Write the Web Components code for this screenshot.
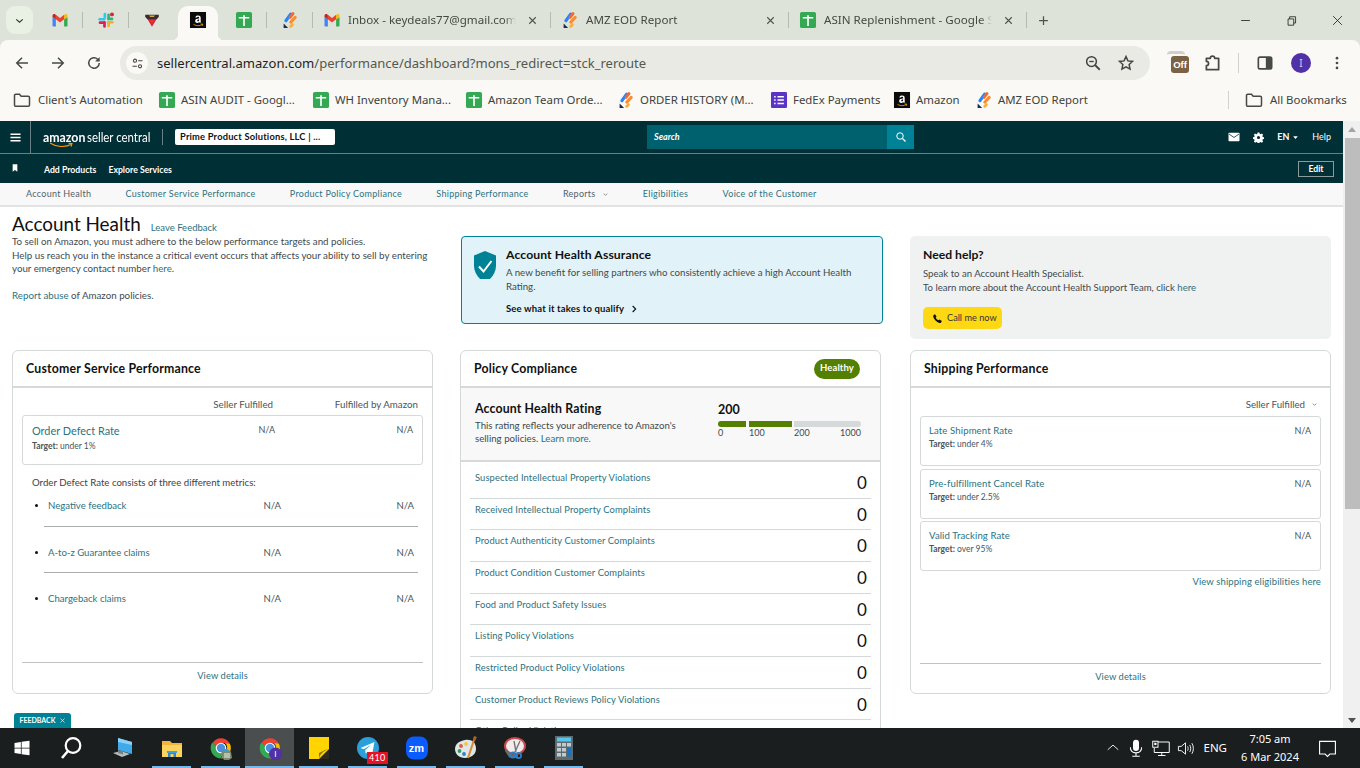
<!DOCTYPE html>
<html lang="en"><head><meta charset="utf-8"><title>Account Health</title>
<style>
html,body{margin:0;padding:0;width:1360px;height:768px;overflow:hidden;background:#fff}
</style></head><body>
<app-root></app-root>
<script>
const sheet='<rect x="1.300" y="1.300" width="21.400" height="21.400" rx="2.500" fill="#34a853"/><path d="M5 9h14M12 5.500V20" stroke="#fff" stroke-width="2.200" fill="none"/>';
const amz='<rect x="1.300" y="1.300" width="21.400" height="21.400" fill="#0b0b0b"/><path d="M15.600 15.500V9.200c0-2.100-1.300-3.200-3.500-3.200-2 0-3.300.9-3.600 2.500l2 .2c.1-.8.700-1.100 1.500-1.100.9 0 1.500.5 1.500 1.500v.8c-3.100.1-5.300.9-5.300 3.400 0 1.700 1.200 2.600 2.800 2.600 1.100 0 2-.5 2.600-1.300l.5 1.100zm-2.100-3.400c0 1.100-.7 1.800-1.500 1.800-.7 0-1.100-.5-1.100-1.100 0-1.100 1.100-1.500 2.600-1.600z" fill="#fff"/><path d="M6 17.800c3.800 2.400 8.200 2.400 12 0M15.500 17.300l2.800.2-.6 2.400" stroke="#f90" stroke-width="1.100" fill="none"/>';
const jira='<g fill="none" stroke-linecap="round" stroke-width="4"><path d="M6.500 13L13 4" stroke="#2684ff"/><path d="M12 8.500L16 3.500" stroke="#f26a2e"/><path d="M13 15l6-6.500" stroke="#fb8c2b"/><path d="M13 20.500l2-2.300" stroke="#fbb03b"/></g><path d="M3.500 16.500l6 6h-6z" fill="#172b4d"/>';
const chromeBase='<path d="M3.500 7a10 10 0 0 1 17 0H12a5 5 0 0 0-4.600 3z" fill="#ea4335"/><path d="M20.800 7.500A10.500 10.500 0 0 1 12 22.500l4.300-7.500a5 5 0 0 0-.3-8z" fill="#fbbc04"/><path d="M3.200 6.500A10.500 10.500 0 0 0 11.500 22.500l4.300-7.500A5 5 0 0 1 7.400 10z" fill="#34a853"/><circle cx="12" cy="12" r="5.300" fill="#fff"/><circle cx="12" cy="12" r="4.200" fill="#4a90e2"/>';
const ICONS={
gmail:'<path fill="#4285f4" d="M2 19.500a1 1 0 0 0 1 1h3.500V11L2 8z"/><path fill="#34a853" d="M17.500 20.500H21a1 1 0 0 0 1-1V8l-4.500 3z"/><path fill="#fbbc04" d="M17.500 5v6L22 8V6.500c0-2-2.200-3-3.700-1.900z"/><path fill="#ea4335" d="M6.500 11V5l5.500 4.200L17.500 5v6L12 15.200z"/><path fill="#c5221f" d="M2 6.500V8l4.500 3V5l-.8-.4C4.200 3.500 2 4.500 2 6.500z"/>',
slack:'<g fill="none" stroke-width="3.600" stroke-linecap="round"><path d="M10.500 4v4.500" stroke="#36c5f0"/><path d="M3.500 11h6" stroke="#36c5f0"/><path d="M15.500 10.500V5" stroke="#2eb67d"/><path d="M15.500 10.500H20" stroke="#2eb67d"/><path d="M9 15.500H4" stroke="#e01e5a"/><path d="M10 15v5.500" stroke="#e01e5a"/><path d="M15.500 15.500V20" stroke="#ecb22e"/><path d="M15 15h5.500" stroke="#ecb22e"/></g><circle cx="20" cy="4.500" r="2.600" fill="#e0203a"/>',
tri:'<path d="M3 6h18l-9 15z" fill="#d9253b"/><path d="M3 5h18v3l-3 3H6L3 8z" fill="#3a2b2e"/><path d="M8 6h8l-1.500 2h-5z" fill="#d9a441"/><path d="M9 12h6l-3 5z" fill="#ef2d44"/>',
sheet,amz,jira,
fedex:'<rect x="1.300" y="1.300" width="21.400" height="21.400" rx="1.500" fill="#5b34c7"/><path d="M10 7.500h8.500M10 12h8.500M10 16.500h8.500M5.500 7.500h2M5.500 12h2M5.500 16.500h2" stroke="#fff" stroke-width="2"/>',
chev:'<path d="M6 10l6 5 6-5" fill="none" stroke="#2e312c" stroke-width="2.200"/>',
close:'<path d="M6 6l12 12M18 6L6 18" stroke="#50534d" stroke-width="2" fill="none"/>',
plus:'<path d="M12 5v14M5 12h14" stroke="#50534d" stroke-width="2" fill="none"/>',
min:'<path d="M5 12h14" stroke="#1d1d1d" stroke-width="1.300"/>',
restore:'<path d="M6.500 9.500h9v10h-9zM9 9.500V6h9.500v10h-3" fill="none" stroke="#1d1d1d" stroke-width="1.300"/>',
winx:'<path d="M5 5l14 14M19 5L5 19" stroke="#1d1d1d" stroke-width="1.300" fill="none"/>',
back:'<path d="M20 12H5.500M12 5l-7 7 7 7" fill="none" stroke="#474a45" stroke-width="2"/>',
fwd:'<path d="M4 12h14.500M12 5l7 7-7 7" fill="none" stroke="#474a45" stroke-width="2"/>',
reload:'<path d="M19 12a7 7 0 1 1-2.200-5.100L19 9" fill="none" stroke="#474a45" stroke-width="2"/><path d="M19.500 4v6h-6z" fill="#474a45"/>',
tune:'<circle cx="8" cy="7.500" r="2.500" fill="none" stroke="#444" stroke-width="1.700"/><path d="M13 7.500h7M4 16.500h7" stroke="#444" stroke-width="1.700"/><circle cx="16" cy="16.500" r="2.500" fill="none" stroke="#444" stroke-width="1.700"/>',
zoomout:'<circle cx="10" cy="10" r="6.500" fill="none" stroke="#444" stroke-width="2"/><path d="M15 15l6 6" stroke="#444" stroke-width="2.400"/><path d="M7 10h6" stroke="#444" stroke-width="1.800"/>',
star:'<path d="M12 3.500l2.600 5.700 6.100.7-4.500 4.200 1.200 6.100L12 17.200l-5.400 3 1.200-6.100-4.500-4.200 6.100-.7z" fill="none" stroke="#444" stroke-width="2"/>',
puzzle:'<path d="M5 6h4.500a2.500 2.500 0 0 1 5 0H19v13H5v-4.500a2.500 2.500 0 0 0 0-5z" fill="none" stroke="#474a45" stroke-width="2" stroke-linejoin="round"/>',
panel:'<rect x="4" y="5" width="16" height="14" rx="2" fill="none" stroke="#474a45" stroke-width="2"/><rect x="13" y="5" width="7" height="14" fill="#474a45"/>',
dots:'<circle cx="12" cy="5.500" r="1.800" fill="#474a45"/><circle cx="12" cy="12" r="1.800" fill="#474a45"/><circle cx="12" cy="18.500" r="1.800" fill="#474a45"/>',
folder:'<path d="M3 6.500a1.500 1.500 0 0 1 1.500-1.500H9l2 2.500h8.500A1.500 1.500 0 0 1 21 9v9a1.500 1.500 0 0 1-1.500 1.500h-15A1.500 1.500 0 0 1 3 18z" fill="none" stroke="#474a45" stroke-width="1.800"/>',
menu:'<path d="M1 5h22M1 12h22M1 19h22" stroke="#fff" stroke-width="3"/>',
mark:'<path d="M5 1h14v22l-7-5-7 5z" fill="#fff"/>',
search:'<circle cx="10" cy="10" r="6.500" fill="none" stroke="#fff" stroke-width="2"/><path d="M15 15l6 6" stroke="#fff" stroke-width="2.600"/>',
mail:'<rect x="1" y="3.500" width="22" height="17" rx="1.500" fill="#fff"/><path d="M2 6l10 7 10-7" fill="none" stroke="#002f36" stroke-width="1.600"/>',
gear:'<path fill="#fff" fill-rule="evenodd" d="M10 1h4l.6 3 2.100.9 2.600-1.700 2.800 2.800-1.700 2.600.9 2.100 3 .6v4l-3 .6-.9 2.100 1.700 2.600-2.800 2.800-2.600-1.700-2.100.9-.6 3h-4l-.6-3-2.100-.9-2.600 1.700-2.800-2.800 1.700-2.600-.9-2.100-3-.6v-4l3-.6.9-2.100-1.700-2.600 2.800-2.800 2.600 1.700 2.100-.9zM12 8.500a3.500 3.500 0 1 0 0 7 3.500 3.500 0 0 0 0-7z"/>',
phone:'<path fill="#0f1111" d="M6.500 2.500l3.500 5-2 2.500c1 2.500 3.500 5 6 6l2.500-2 5 3.500-2 3.500c-.5 1-2 1.300-3.500.8C10 19.800 4.200 14 2.700 8c-.4-1.500 0-2.800 1-3.500z"/>',
shield:'<path fill="#008296" d="M12 0l11 4.500V15c0 7-5 13-11 17C6 28 1 22 1 15V4.500z"/><path d="M6 15.500l4.500 5L18.500 10" fill="none" stroke="#fff" stroke-width="2"/>',
win:'<path fill="#fff" d="M2 5.200l8.500-1.200v7.500H2zM11.500 3.800L22 2.300v9.200H11.500zM2 12.500h8.500V20L2 18.800zM11.500 12.500H22v9.200l-10.500-1.500z"/>',
tsearch:'<circle cx="14" cy="9.500" r="7.300" fill="none" stroke="#fff" stroke-width="2.200"/><path d="M9 15L3 22" stroke="#fff" stroke-width="2.600"/>',
pc:'<path d="M7 2l14 4v12L7 14z" fill="#3fa9ea"/><path d="M7 2l14 4v3L7 6z" fill="#8ad0f7"/><path d="M2 17l8-2 9 3-8 3z" fill="#b8bcbd"/><path d="M7 14l5 1.500v3l-5-1.500z" fill="#7a7f80"/>',
explorer:'<path d="M2 5h8l2 2h10v14H2z" fill="#f2b63c"/><path d="M2 9h20v12H2z" fill="#fbd35f"/><path d="M8 21v-5h8v5h-2.500v-3h-3v3z" fill="#2f86c9"/><path d="M7 15h10v2H7z" fill="#3fa1e0"/>',
chromea:chromeBase+'<path d="M13 14l4-1 5 3 1 6-3 2h-5l-3-5z" fill="#7d8a73"/><path d="M15 17h6v5h-6z" fill="#b9c0a8"/><path d="M13 14l5-1 4 3h-8z" fill="#3f9bc9"/>',
chromeb:chromeBase+'<circle cx="17.500" cy="18" r="6.500" fill="#5131a8"/><path d="M17.500 15v6" stroke="#cfc6ef" stroke-width="1.300"/>',
sticky:'<rect x="2" y="1" width="20" height="22" fill="#ffd400"/><path d="M12 23l10-10v10z" fill="#2d2a1e"/><path d="M12 23c1-5 4-8 10-10l-4 1-6 3z" fill="#8a7414"/>',
telegram:'<circle cx="12" cy="12" r="11" fill="#2c9fd9"/><path d="M4.500 12l14-6-2.500 13-4.300-3.300-2 2-.5-3.700 6-5.300-7.500 4.600z" fill="#fff"/>',
zoomapp:'<rect x="1" y="0.500" width="22" height="23" rx="8" fill="#0b5cff"/>',
paint:'<path d="M11 4c6-1 11 2 11 9 0 6-6 9-11 9C5 22 1 18 1 13S5 5 11 4z" fill="#dfe6ea"/><circle cx="7" cy="10" r="1.900" fill="#e05a3a"/><circle cx="12" cy="8" r="1.900" fill="#f5c53b"/><circle cx="5.500" cy="15" r="1.900" fill="#3a9a53"/><circle cx="10" cy="18" r="1.900" fill="#2f7fd1"/><path d="M21 1L14 22" stroke="#d88a2f" stroke-width="2"/><path d="M20 0l3 1-2 4-2-1z" fill="#a0612a"/>',
snip:'<ellipse cx="12" cy="10" rx="10" ry="8" fill="#f3ecec" stroke="#c9474a" stroke-width="2"/><path d="M3 14l4 6h8" fill="none" stroke="#6b6b6b" stroke-width="3"/><path d="M11 5l2 11M17 5l-5 11" stroke="#777" stroke-width="1.400"/><circle cx="10" cy="19" r="2.600" fill="none" stroke="#2382c9" stroke-width="1.800"/><circle cx="15.500" cy="19.500" r="2.600" fill="none" stroke="#2382c9" stroke-width="1.800"/>',
calc:'<rect x="3" y="0" width="18" height="24" fill="#5d6a70"/><rect x="5" y="1.500" width="14" height="4" fill="#58c6e8"/><g fill="#c4cbd0"><rect x="5" y="7" width="4" height="3.500"/><rect x="10" y="7" width="4" height="3.500"/><rect x="15" y="7" width="4" height="3.500"/><rect x="5" y="12" width="4" height="3.500"/><rect x="10" y="12" width="4" height="3.500"/><rect x="5" y="17" width="4" height="3.500"/><rect x="10" y="17" width="4" height="3.500"/></g><rect x="15" y="12" width="4" height="8.500" fill="#1e70b8"/>',
tup:'<path d="M3 15l9-8 9 8" fill="none" stroke="#fff" stroke-width="1.500"/>',
mic:'<rect x="8" y="1" width="8" height="15" rx="4" fill="#fff"/><path d="M4.500 11c0 5 3 7.500 7.500 7.500s7.500-2.500 7.500-7.500M12 18.500V23M7 23h10" fill="none" stroke="#fff" stroke-width="1.400"/>',
net:'<path d="M8 4h15v14H3v-6M13 18v4M8 22h10" fill="none" stroke="#fff" stroke-width="1.300"/><rect x="1" y="3" width="7" height="8" fill="#1b1e1e" stroke="#fff" stroke-width="1.300"/><rect x="3" y="5" width="3" height="3" fill="#fff"/>',
vol:'<path d="M2 9h4l6-5v16l-6-5H2z" fill="none" stroke="#fff" stroke-width="1.300"/><path d="M15 9c1 2 1 4 0 6M18 7c1.800 3 1.800 7 0 10M21 4.500c2.800 4.500 2.800 10.500 0 15" fill="none" stroke="#fff" stroke-width="1.300"/>',
notify:'<path d="M2 3h20v16h-7l-3 3-3-3H2z" fill="none" stroke="#fff" stroke-width="1.400"/>',
smallchev:'<path d="M6 9l6 6 6-6" fill="none" stroke="#666" stroke-width="2.400"/>',
right:'<path d="M8 3l9 9-9 9" fill="none" stroke="#0f1111" stroke-width="3.400"/>',
x:'<path d="M5 5l14 14M19 5L5 19" stroke="#fff" stroke-width="2.200" fill="none"/>',
caret:'<path d="M4 8h16l-8 9z" fill="#fff"/>',
};
class UiIcon extends HTMLElement{
 constructor(){super();this.attachShadow({mode:'open'})}
 connectedCallback(){
  const s=this.getAttribute('size')||16,w=this.getAttribute('w')||s,n=this.getAttribute('name');
  this.shadowRoot.innerHTML=`<style>:host{display:inline-flex;flex:none;width:${w}px;height:${s}px}svg{display:block;width:100%;height:100%}</style><svg viewBox="0 0 24 24" preserveAspectRatio="xMidYMid meet">${ICONS[n]||''}</svg>`;
 }
}
customElements.define('ui-icon',UiIcon);
function comp(name,html){
 customElements.define(name,class extends HTMLElement{
  constructor(){super();const r=this.attachShadow({mode:'open'});r.innerHTML=html}
 });
}
function attrComp(name,fn){
 customElements.define(name,class extends HTMLElement{
  constructor(){super();this.attachShadow({mode:'open'})}
  connectedCallback(){this.shadowRoot.innerHTML=fn(a=>this.getAttribute(a))}
 });
}
const UI='"Noto Sans","Open Sans",sans-serif', PG='Lato,"Noto Sans",sans-serif';

attrComp('pin-tab',g=>`<style>:host{display:flex;flex:none;width:46px;height:40px;align-items:center;justify-content:center;box-sizing:border-box;position:relative}
.sep{position:absolute;right:0;top:12px;height:16px;width:1px;background:#b5bbae}
.act{position:absolute;left:3px;right:3px;top:6px;bottom:0;background:#faf9f5;border-radius:10px 10px 0 0}
.act::before,.act::after{content:"";position:absolute;bottom:0;width:6px;height:6px}
.act::before{left:-6px;background:radial-gradient(circle at 0 0,transparent 6px,#faf9f5 6.500px)}
.act::after{right:-6px;background:radial-gradient(circle at 100% 0,transparent 6px,#faf9f5 6.500px)}
ui-icon{position:relative}</style>
${g('active')!==null?'<div class="act"></div>':''}<ui-icon name="${g('icon')}" size="18"></ui-icon>${g('sep')!==null?'<div class="sep"></div>':''}`);

attrComp('page-tab',g=>`<style>:host{display:flex;flex:none;width:238px;height:40px;align-items:center;box-sizing:border-box;padding:0 10px 0 10px;position:relative;font:11.600px/16px ${UI};color:#45483f}
ui-icon{margin-right:7px}
.t{flex:none;width:168px;white-space:nowrap;overflow:hidden;-webkit-mask-image:linear-gradient(90deg,#000 93%,transparent)}
.c{margin-left:auto;margin-right:2px}
.sep{position:absolute;right:0;top:12px;height:16px;width:1px;background:#b5bbae}</style>
<ui-icon name="${g('icon')}" size="18"></ui-icon><div class="t"><slot></slot></div><ui-icon class="c" name="close" size="13"></ui-icon><div class="sep"></div>`);

comp('tab-strip',`<style>:host{display:flex;height:40px;background:#dee3d9;align-items:flex-start;flex:none}
.col{width:27px;height:28px;margin:6px 4px 0 6px;background:#e9f1e4;border-radius:9px;display:flex;align-items:center;justify-content:center;flex:none}
.plus{margin:13px 0 0 9px}.win{margin-left:auto;display:flex}
.win div{width:46px;height:40px;display:flex;align-items:center;justify-content:center}
</style>
<div class="col"><ui-icon name="chev" size="13"></ui-icon></div>
<pin-tab icon="gmail" sep></pin-tab><pin-tab icon="slack" sep></pin-tab><pin-tab icon="tri"></pin-tab><pin-tab icon="amz" active></pin-tab><pin-tab icon="sheet" sep></pin-tab><pin-tab icon="jira" sep></pin-tab>
<page-tab icon="gmail">Inbox - keydeals77@gmail.com</page-tab>
<page-tab icon="jira">AMZ EOD Report</page-tab>
<page-tab icon="sheet">ASIN Replenishment - Google Sheets</page-tab>
<ui-icon class="plus" name="plus" size="15"></ui-icon>
<div class="win"><div><ui-icon name="min" size="15"></ui-icon></div><div><ui-icon name="restore" size="15"></ui-icon></div><div><ui-icon name="winx" size="15"></ui-icon></div></div>`);

comp('chrome-toolbar',`<style>:host{display:flex;height:46px;flex:none;background:#faf9f5;border-radius:8px 8px 0 0;align-items:center;position:relative;box-sizing:border-box;padding-left:13px}
.ic{width:36px;flex:none;display:flex;justify-content:flex-start}
.bx{margin-left:-1px;width:1030px;height:34px;border-radius:17px;background:#e9eae4;display:flex;align-items:center;box-sizing:border-box;padding:0 15px 0 6px;flex:none;font:13.050px/18px ${UI}}
.tune{width:22px;height:22px;border-radius:50%;background:#faf9f5;display:flex;align-items:center;justify-content:center;margin-right:9px}
.u{color:#1f1f1f}.u span{color:#55584f}
.sp{flex:1}
.off{position:relative;width:24px;height:24px;margin-left:18px;flex:none}
.off i{position:absolute;left:-1px;top:0;width:18px;height:12px;border-top:3px solid #cfd0cb;border-radius:4px}
.off b{position:absolute;left:3px;top:5px;width:18px;height:17px;background:#7b6146;border-radius:3px;color:#fff;font:bold 9.500px/18px "Liberation Sans",sans-serif;text-align:center}
.av{width:20px;height:20px;border-radius:50%;background:#5131a8;color:#d8d0f2;font:10px/20px ${UI};text-align:center;flex:none}
.sepv{width:1px;height:20px;background:#cfd3ca;flex:none}
</style>
<div class="ic"><ui-icon name="back" size="18"></ui-icon></div>
<div class="ic"><ui-icon name="fwd" size="18"></ui-icon></div>
<div class="ic"><ui-icon name="reload" size="18"></ui-icon></div>
<div class="bx"><div class="tune"><ui-icon name="tune" size="15"></ui-icon></div><div class="u">sellercentral.amazon.com<span>/performance/dashboard?mons_redirect=stck_reroute</span></div><div class="sp"></div><ui-icon name="zoomout" size="18" style="margin-right:15px"></ui-icon><ui-icon name="star" size="18"></ui-icon></div>
<div class="off"><i></i><b>Off</b></div>
<ui-icon name="puzzle" size="21" style="margin-left:10px"></ui-icon>
<div class="sepv" style="margin-left:15px"></div>
<ui-icon name="panel" size="20" style="margin-left:16px"></ui-icon>
<div class="av" style="margin-left:16px">I</div>
<ui-icon name="dots" size="18" style="margin-left:17px"></ui-icon>`);

attrComp('bm-item',g=>`<style>:host{display:flex;align-items:center;flex:none;width:${g('w')}px;font:11.400px/16px ${UI};color:#3e413c;white-space:nowrap}
ui-icon{margin-right:${g('gap')||0}px}</style><ui-icon name="${g('icon')}" size="${g('size')||18}"></ui-icon><slot></slot>`);

comp('bookmark-bar',`<style>:host{display:flex;height:35px;flex:none;background:#faf9f5;align-items:center;box-sizing:border-box;padding:0 0 7px 12px}
.s{width:1px;height:18px;background:#cfd3ca;margin-left:auto;margin-right:15px}
</style>
<bm-item icon="folder" w="146" gap="6" size="20">Client's Automation</bm-item>
<bm-item icon="sheet" w="154" gap="5">ASIN AUDIT - Googl...</bm-item>
<bm-item icon="sheet" w="153" gap="5">WH Inventory Mana...</bm-item>
<bm-item icon="sheet" w="152" gap="5">Amazon Team Orde...</bm-item>
<bm-item icon="jira" w="153" gap="5">ORDER HISTORY (M...</bm-item>
<bm-item icon="fedex" w="123" gap="5">FedEx Payments</bm-item>
<bm-item icon="amz" w="82" gap="5">Amazon</bm-item>
<bm-item icon="jira" w="130" gap="5">AMZ EOD Report</bm-item>
<div class="s"></div>
<bm-item icon="folder" w="116" gap="6" size="20">All Bookmarks</bm-item>`);

comp('seller-header',`<style>:host{display:block;background:#002f36;color:#fff;flex:none;font:bold 8.700px/12px ${PG}}
.top{height:32px;display:flex;align-items:center;border-bottom:1px solid #6b8085}
.brg{width:30px;height:32px;border-right:1px solid #6b8085;display:flex;align-items:center;justify-content:center;flex:none}
.logo{margin-left:12px;width:107px;height:20px;display:flex;align-items:center;position:relative;white-space:nowrap;flex:none;font:400 14px/18px ${PG}}
.logo span{display:block;flex:none;transform-origin:0 50%}
.logo .a{font-weight:700;width:44px;transform:scaleX(.88)}
.logo .s{width:63px;transform:scaleX(.815)}
.logo svg{position:absolute;left:6px;top:15px;width:24px;height:6px}
.div{width:1px;height:16px;background:#6b8085;margin:0 12px 0 12px;flex:none}
.store{width:160px;height:16px;background:#fff;color:#0f1111;border-radius:2px;font:bold 9.300px/16px ${PG};padding-left:5px;box-sizing:border-box;white-space:nowrap;flex:none;letter-spacing:.2px}
.sr{margin-left:312px;width:267px;height:24px;display:flex;flex:none}
.sr .f{flex:1;background:#00616e;font:italic bold 9px/24px ${PG};padding-left:7px}
.sr .b{width:27px;background:#008296;display:flex;align-items:center;justify-content:center}
.rt{margin-left:auto;display:flex;align-items:center;font:700 9px/12px ${PG};padding-right:12px}
.row2{height:29px;display:flex;align-items:center;box-sizing:border-box;padding:2px 9px 0 11px}
.row2 a{margin-right:12px}
.edit{margin-left:auto;width:36px;height:16px;border:1px solid #8b9a9d;box-sizing:border-box;text-align:center;line-height:14px;position:relative;top:-1px}
</style>
<div class="top"><div class="brg"><ui-icon name="menu" size="11"></ui-icon></div>
<div class="logo"><span class="a">amazon</span><span class="s">seller central</span><svg viewBox="0 0 24 6"><path d="M1 1c6 4 15 5 22 1M19.500 1.300l3.500.3-.9 3" fill="none" stroke="#f90" stroke-width="1.100"/></svg></div>
<div class="div"></div><div class="store">Prime Product Solutions, LLC | ...</div>
<div class="sr"><div class="f">Search</div><div class="b"><ui-icon name="search" size="12"></ui-icon></div></div>
<div class="rt"><ui-icon name="mail" size="12"></ui-icon><ui-icon name="gear" size="11" style="margin-left:13px"></ui-icon><span style="margin-left:13px">EN</span><ui-icon name="caret" size="7" style="margin:0 0 0 3px"></ui-icon><span style="margin-left:13px;font-weight:400">Help</span></div></div>
<div class="row2"><ui-icon name="mark" size="8" style="margin:-3px 25px 0 0"></ui-icon><a>Add Products</a><a>Explore Services</a><div class="edit">Edit</div></div>`);

comp('seller-nav',`<style>:host{display:flex;height:24px;flex:none;background:#f8f8f8;border-bottom:2px solid #e3e3e3;box-sizing:border-box;align-items:center;padding-left:26px;gap:34.300px;font:9px/12px ${PG};color:#2d7280;white-space:nowrap;letter-spacing:.28px}
.a{color:#50626a}.r{display:flex;align-items:center;gap:6px;color:#50626a}
</style>
<span class="a">Account Health</span><span>Customer Service Performance</span><span>Product Policy Compliance</span><span>Shipping Performance</span>
<span class="r">Reports<ui-icon name="smallchev" size="7"></ui-icon></span><span>Eligibilities</span><span>Voice of the Customer</span>`);

comp('account-intro',`<style>:host{display:block;padding-top:5px;font:9.750px/13.500px ${PG};color:#3f4a4d;white-space:nowrap}
.h{display:flex;align-items:baseline;height:23px;gap:10px}
h1{margin:0;font:400 18.900px/23px ${PG};color:#0f1111}
a{color:#2d7280}.lf{font-size:9.500px}
</style><div class="h"><h1>Account Health</h1><a class="lf">Leave Feedback</a></div>
To sell on Amazon, you must adhere to the below performance targets and policies.<br>
Help us reach you in the instance a critical event occurs that affects your ability to sell by entering<br>
your emergency contact number <a>here</a>.<br><br><a>Report abuse</a> of Amazon policies.`);

comp('assurance-card',`<style>:host{display:flex;margin:29px 0 0 1px;height:88px;box-sizing:border-box;background:#e1f3f8;border:1px solid #008296;border-radius:4px;padding:10px 0 0 11px;font:9.700px/13.500px ${PG};color:#3f4a4d}
.m{margin-left:9px;flex:1}
h3{margin:0 0 3px;font:700 12.200px/16px ${PG};color:#0f1111;letter-spacing:.1px}
.s{margin-top:9px;font-weight:700;color:#0f1111;display:flex;align-items:center;gap:6px;letter-spacing:.15px;font-size:9.500px}
p{margin:0;width:370px}
</style><ui-icon name="shield" size="32" w="24"></ui-icon><div class="m"><h3>Account Health Assurance</h3><p>A new benefit for selling partners who consistently achieve a high Account Health Rating.</p><div class="s">See what it takes to qualify<ui-icon name="right" size="8"></ui-icon></div></div>`);

comp('help-card',`<style>:host{display:block;margin-top:29px;height:103px;box-sizing:border-box;background:#f0f1f1;border-radius:5px;padding:10px 0 0 13px;font:9.600px/13.500px ${PG};color:#3f4a4d}
h3{margin:0 0 4px;font:700 12.200px/17px ${PG};color:#0f1111}
a{color:#2d7280}
.btn{margin-top:13px;width:79px;height:22px;background:#ffd814;border-radius:5px;display:flex;align-items:center;padding-left:9px;box-sizing:border-box;gap:4px;color:#333;font-size:9.200px}
</style><h3>Need help?</h3>Speak to an Account Health Specialist.<br>To learn more about the Account Health Support Team, click <a>here</a><div class="btn"><ui-icon name="phone" size="11"></ui-icon>Call me now</div>`);

comp('perf-card',`<style>:host{display:flex;flex-direction:column;box-sizing:border-box;background:#fff;border:1px solid #d5d9d9;border-radius:6px;min-height:344px}
.h{height:35px;border-bottom:2px solid #d5d9d9;display:flex;align-items:center;justify-content:space-between;padding:0 20px 0 13px;flex:none;font:700 12.300px/16px ${PG};color:#0f1111;letter-spacing:.2px}
.b{flex:1;display:flex;flex-direction:column}
</style><div class="h"><slot name="title"></slot><slot name="badge"></slot></div><div class="b"><slot></slot></div>`);

comp('card-foot',`<style>:host{display:block;margin:auto 9px 0;height:30px;border-top:1px solid #bfc3c3;text-align:center;font:9.300px/26px ${PG};color:#2d7280;letter-spacing:.1px}</style><slot></slot>`);

comp('odr-row',`<style>:host{display:grid;grid-template-columns:1fr 60px 138px;margin:5px 9px 0;height:50px;box-sizing:border-box;border:1px solid #d5d9d9;border-radius:3px;padding:8px 9px 0 9px;font:9px/12px ${PG};color:#49565a;text-align:right}
.l{text-align:left;font-size:10.900px;line-height:15px;color:#2d7280;margin-top:-1px}.t{font-size:8.500px;line-height:13px;color:#49565a;margin-top:2px}.t b{font-weight:700}
</style><div class="l">Order Defect Rate<div class="t"><b>Target:</b> under 1%</div></div><div>N/A</div><div>N/A</div>`);

attrComp('sub-metric',g=>`<style>:host{display:grid;grid-template-columns:1fr 60px 133px;position:relative;margin:0 9px;padding:${g('pt')}px 9px ${g('pb')}px 26px;font:9.600px/14px ${PG};color:#49565a;text-align:right}
.l{text-align:left;color:#2d7280}
:host::before{content:"";position:absolute;left:13px;top:calc(${g('pt')}px + 5px);width:3px;height:3px;border-radius:50%;background:#111}
.hr{position:absolute;left:22px;right:5px;bottom:0;height:1px;background:${g('line')!==null?'#a9adad':'transparent'}}
</style><div class="l"><slot></slot></div><div>N/A</div><div>N/A</div><div class="hr"></div>`);

comp('csp-panel',`<style>:host{display:flex;flex-direction:column;flex:1;font:9.750px/12px ${PG};color:#49565a}
.cols{display:grid;grid-template-columns:1fr 60px 145px;margin:0 14px 0 9px;padding-top:10px;height:12px;text-align:right;white-space:nowrap}
.in{margin:10px 9px 0 19px;line-height:14px;font-size:9.650px;color:#3a4448}
</style><div class="cols"><span></span><span>Seller Fulfilled</span><span>Fulfilled by Amazon</span></div>
<odr-row></odr-row><div class="in">Order Defect Rate consists of three different metrics:</div>
<sub-metric pt="10" pb="14" line>Negative feedback</sub-metric><sub-metric pt="19" pb="13" line>A-to-z Guarantee claims</sub-metric><sub-metric pt="19" pb="0">Chargeback claims</sub-metric>
<card-foot>View details</card-foot>`);

comp('health-rating',`<style>:host{display:grid;grid-template-columns:243px 143px;height:74px;box-sizing:border-box;background:#f8f8f8;border-bottom:2px solid #d5d9d9;padding:13px 0 0 14px;font:9.700px/13px ${PG};color:#3f4a4d}
h3{margin:0 0 2px;font:700 12.300px/16px ${PG};color:#0f1111;letter-spacing:.15px}a{color:#2d7280}
.v{font:700 12.500px/18px ${PG};color:#0f1111;margin-bottom:2px}
.bar{display:flex;height:6px;gap:3px}.bar i{display:block;background:#538000}.bar i:nth-child(1){width:28px;border-radius:3px 0 0 3px}.bar i:nth-child(2){width:43px}.bar i:nth-child(3){width:67px;margin-left:-1px;background:#d5d9d9;border-radius:0 3px 3px 0}
.lb{display:grid;grid-template-columns:31px 45px 46px auto;font-size:9px;line-height:12px;margin-top:0}
</style><div><h3>Account Health Rating</h3>This rating reflects your adherence to Amazon's<br>selling policies. <a>Learn more.</a></div>
<div><div class="v">200</div><div class="bar"><i></i><i></i><i></i></div><div class="lb"><span>0</span><span>100</span><span>200</span><span>1000</span></div></div>`);

attrComp('policy-row',g=>`<style>:host{display:flex;justify-content:space-between;align-items:flex-start;height:31.670px;box-sizing:border-box;margin:0 9px;border-bottom:1px solid #d5d9d9;padding:4px 4px 0 5px;font:9.400px/14px ${PG};color:#2d7280;letter-spacing:.1px}
b{font:400 17px/24px ${PG};color:#0f1111}
</style><span><slot></slot></span>${g('cut')!==null?'':'<b>0</b>'}`);

comp('ship-box',`<style>:host{display:flex;justify-content:space-between;height:50px;box-sizing:border-box;margin:0 9px;border:1px solid #d5d9d9;border-radius:3px;padding:7px 9px 0 8px;font:9px/13px ${PG};color:#49565a}
a{color:#2d7280;display:block;font-size:9.600px;letter-spacing:.1px}.t{font-size:8.500px;line-height:12px;margin-top:1px}b{font-weight:700}
</style><div><a><slot name="name"></slot></a><div class="t"><b>Target:</b> <slot name="target"></slot></div></div><span>N/A</span>`);

comp('ship-panel',`<style>:host{display:flex;flex-direction:column;flex:1;font:9.700px/12px ${PG};color:#49565a}
.top{padding:10px 9px 6px;display:flex;justify-content:flex-end;align-items:center;gap:5px}
.l{margin:5px 9px 0;text-align:right;color:#2d7280;line-height:12px;font-size:9.500px;letter-spacing:.1px}
.st{display:flex;flex-direction:column;gap:2.500px}
</style><div class="top">Seller Fulfilled<ui-icon name="smallchev" size="7" style="margin-left:1px;margin-right:3px"></ui-icon></div>
<div class="st"><ship-box><span slot="name">Late Shipment Rate</span><span slot="target">under 4%</span></ship-box>
<ship-box><span slot="name">Pre-fulfillment Cancel Rate</span><span slot="target">under 2.5%</span></ship-box>
<ship-box><span slot="name">Valid Tracking Rate</span><span slot="target">over 95%</span></ship-box></div>
<div class="l">View shipping eligibilities here</div><card-foot style="height:29px">View details</card-foot>`);

comp('page-scrollbar',`<style>:host{display:flex;flex-direction:column;width:17px;flex:none;background:#f0f0f0;align-items:center;justify-content:space-between;position:relative}
.u,.d{width:0;height:0;border-left:4px solid transparent;border-right:4px solid transparent}
.u{border-bottom:5px solid #a3a3a3;margin-top:6px}.d{border-top:5px solid #505050;margin-bottom:5px}
.t{position:absolute;top:17px;left:2px;right:0;height:371px;background:#bdbdbd}
</style><div class="u"></div><div class="t"></div><div class="d"></div>`);

comp('seller-page',`<style>:host{display:flex;flex:1;min-height:0;position:relative;overflow:hidden;background:#fff}
.m{flex:1;min-width:0;display:flex;flex-direction:column;overflow:hidden}
.g{display:grid;flex:none;grid-template-columns:448px 450px 421px;padding:0 12px;align-items:start}
.g>*:nth-child(1){width:421px}.g>*:nth-child(2){width:421px}.g>*:nth-child(3){width:421px}
.g1{height:143px}
.g1>*:nth-child(2){width:422px}
.fb{position:absolute;left:14px;bottom:0;width:57px;height:15px;background:#008296;border-radius:3px 3px 0 0;color:#fff;font:700 7px/15px ${PG};display:flex;align-items:center;justify-content:center;gap:3px}
.pill{background:#538000;color:#fff;border-radius:10px;height:20px;width:46px;text-align:center;font:700 9.500px/18px ${PG};letter-spacing:.1px}
</style><div class="m"><seller-header></seller-header><seller-nav></seller-nav>
<div class="g g1"><account-intro></account-intro><assurance-card></assurance-card><help-card></help-card></div>
<div class="g"><perf-card><span slot="title">Customer Service Performance</span><csp-panel></csp-panel></perf-card>
<perf-card><span slot="title">Policy Compliance</span><span slot="badge" class="pill">Healthy</span>
<health-rating></health-rating><div style="height:5px;flex:none"></div>
<policy-row>Suspected Intellectual Property Violations</policy-row><policy-row>Received Intellectual Property Complaints</policy-row><policy-row>Product Authenticity Customer Complaints</policy-row><policy-row>Product Condition Customer Complaints</policy-row><policy-row>Food and Product Safety Issues</policy-row><policy-row>Listing Policy Violations</policy-row><policy-row>Restricted Product Policy Violations</policy-row><policy-row>Customer Product Reviews Policy Violations</policy-row><policy-row cut>Other Policy Violations</policy-row></perf-card>
<perf-card><span slot="title">Shipping Performance</span><ship-panel></ship-panel></perf-card></div></div>
<page-scrollbar></page-scrollbar><div class="fb">FEEDBACK<ui-icon name="x" size="7"></ui-icon></div>`);

attrComp('task-app',g=>`<style>:host{display:flex;flex:none;width:${g('w')||49}px;height:40px;align-items:center;justify-content:center;position:relative;box-sizing:border-box;${g('active')!==null?'background:#4a4e4e;':''}}
.u{position:absolute;left:${g('active')!==null?0:5}px;right:${g('active')!==null?0:5}px;bottom:0;height:2px;background:#76b9ed}
.z{position:absolute;color:#fff;font:700 11px/24px "Liberation Sans",sans-serif;left:50%;top:50%;transform:translate(-50%,-50%)}
.bd{position:absolute;left:24px;top:24px;background:#e81123;color:#fff;font:9px/12px ${PG};padding:0 2px;letter-spacing:.3px}
</style><ui-icon name="${g('icon')}" size="${g('size')||24}"></ui-icon>${g('icon')==='zoomapp'?'<span class="z">zm</span>':''}${g('badge')?`<span class="bd">${g('badge')}</span>`:''}${g('line')!==null?'<div class="u"></div>':''}`);

comp('win-taskbar',`<style>:host{display:flex;height:40px;flex:none;background:#1b1e1e;align-items:center;color:#fff;font:11px/16px ${UI}}
.tr{margin-left:auto;display:flex;align-items:center}
.ck{text-align:center;line-height:18px;width:70px;margin-left:8px}
</style><task-app icon="win" size="18" w="44"></task-app><task-app icon="tsearch" size="24" w="54"></task-app><task-app icon="pc" w="49"></task-app>
<task-app icon="explorer" line></task-app><task-app icon="chromea" line></task-app><task-app icon="chromeb" line active></task-app><task-app icon="sticky" line></task-app><task-app icon="telegram" line badge="410"></task-app><task-app icon="zoomapp" line></task-app><task-app icon="paint" line></task-app><task-app icon="snip" line></task-app><task-app icon="calc" line></task-app>
<div class="tr"><ui-icon name="tup" size="14"></ui-icon><ui-icon name="mic" size="18" style="margin-left:7px"></ui-icon><ui-icon name="net" size="18" style="margin-left:7px"></ui-icon><ui-icon name="vol" size="17" style="margin-left:7px"></ui-icon><span style="margin-left:9px;font-size:11.500px">ENG</span><div class="ck">7:05 am<br>6 Mar 2024</div><ui-icon name="notify" size="19" style="margin:0 23px 0 13px"></ui-icon></div>`);

comp('app-root',`<style>:host{display:flex;flex-direction:column;width:1360px;height:768px;overflow:hidden;background:#dee3d9}</style>
<tab-strip></tab-strip><chrome-toolbar></chrome-toolbar><bookmark-bar></bookmark-bar><seller-page></seller-page><win-taskbar></win-taskbar>`);
</script></body></html>
